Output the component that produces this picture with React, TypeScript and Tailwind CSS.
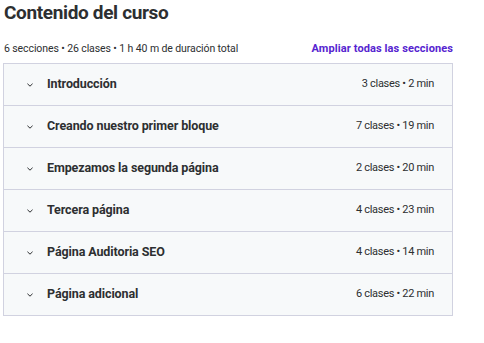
import React from "react";

const rows = [
  { title: "Introducción", meta: "3 clases • 2 min" },
  { title: "Creando nuestro primer bloque", meta: "7 clases • 19 min" },
  { title: "Empezamos la segunda página", meta: "2 clases • 20 min" },
  { title: "Tercera página", meta: "4 clases • 23 min" },
  { title: "Página Auditoria SEO", meta: "4 clases • 14 min" },
  { title: "Página adicional", meta: "6 clases • 22 min" },
];

function Chevron() {
  return (
    <svg width="8" height="8" viewBox="0 0 8 8" fill="none" className="shrink-0">
      <path d="M1.7 3 L4 5.2 L6.3 3" stroke="#2d2f31" strokeWidth="1" strokeLinecap="round" strokeLinejoin="round" />
    </svg>
  );
}

export default function App() {
  return (
    <div className="w-[484px] h-[343px] bg-white text-[#2d2f31]" style={{ fontFamily: "Roboto, 'Liberation Sans', sans-serif" }}>
      <div className="pl-[4px] pt-[1px] w-[457px]">
        <h2 className="text-[19px] font-bold leading-[24px] tracking-[-0.35px]">Contenido del curso</h2>
        <div className="mt-[16px] flex items-center justify-between pr-[4px] h-[16px]">
          <span className="text-[10.5px] tracking-[-0.1px]">6 secciones • 26 clases • 1 h 40 m de duración total</span>
          <span className="text-[11px] font-bold text-[#5624d0] tracking-[0.1px]">Ampliar todas las secciones</span>
        </div>
      </div>
      <div className="ml-[3px] mt-[6px] w-[450px] border border-[#d1d2e0] bg-[#f7f9fa]">
        {rows.map((r, i) => (
          <div
            key={i}
            className={`flex items-center pl-[22px] pr-[18px] ${i > 0 ? "h-[42px] border-t border-[#d1d2e0]" : "h-[41px]"}`}
          >
            <Chevron />
            <span className="ml-[13px] text-[12.5px] font-bold tracking-[-0.1px] flex-1">{r.title}</span>
            <span className="text-[11px] text-[#2d2f31] tracking-[-0.3px]">{r.meta}</span>
          </div>
        ))}
      </div>
    </div>
  );
}
